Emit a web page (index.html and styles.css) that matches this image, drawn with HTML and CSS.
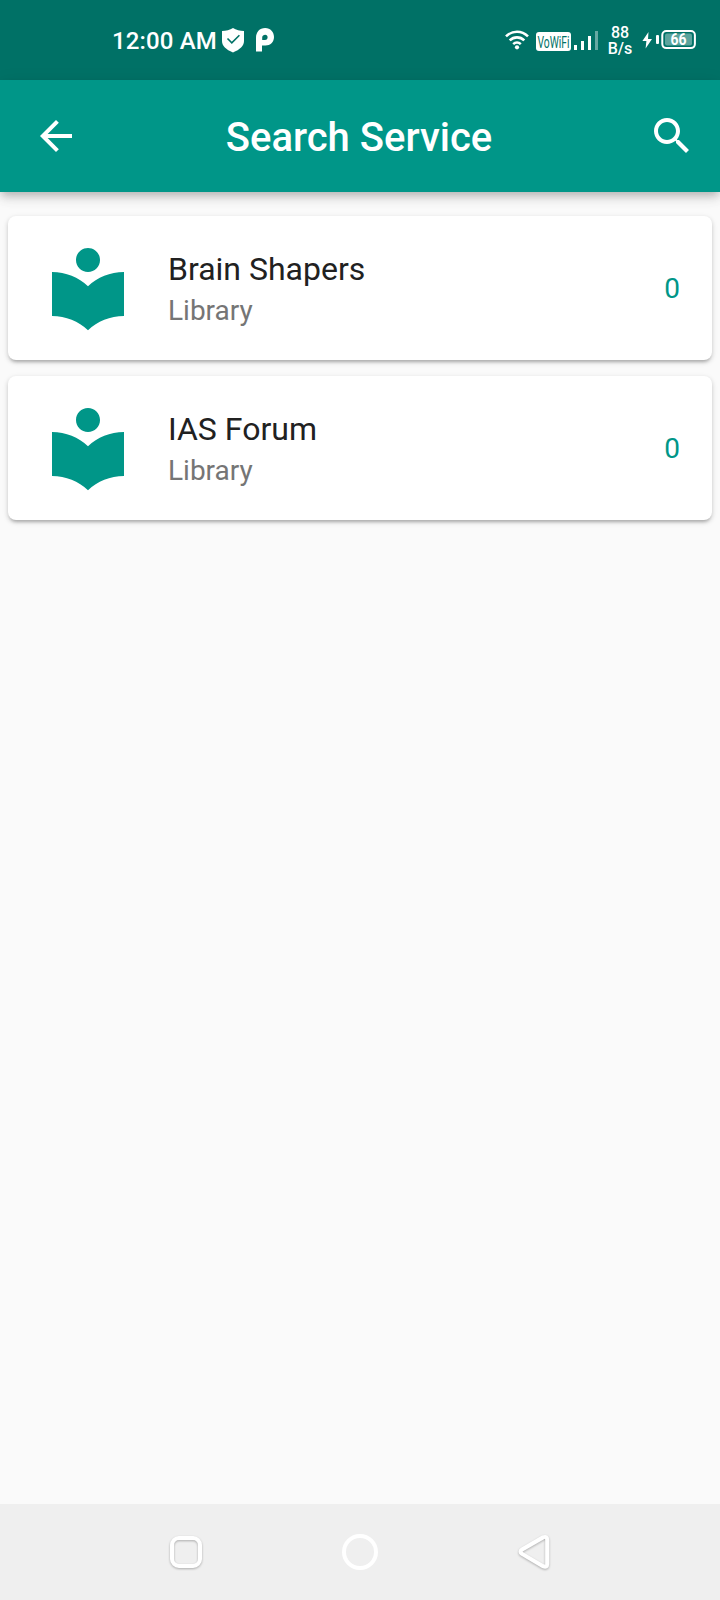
FILE: index.html
```html
<!DOCTYPE html>
<html lang="en">
<head>
<meta charset="utf-8">
<title>Search Service</title>
<link rel="stylesheet" href="styles.css">
</head>
<body>
<div class="screen">
  <div class="status">
    <span class="clock">12:00 AM</span>
    <svg class="shield" width="24" height="26" viewBox="0 0 24 26"><path fill="#fff" d="M12 1C9 3 5 4 1 4v10c0 5 4 8.500 11 11.500C19 22.500 23 19 23 14V4C19 4 15 3 12 1z"/><path fill="none" stroke="#007166" stroke-width="1.600" d="M6.500 11.500l4.300 4.300 7.600-7.600"/></svg>
    <svg class="plogo" width="18" height="24" viewBox="0 0 18 24"><path fill="#fff" fill-rule="evenodd" d="M0 23.500V10C0 4 3.500 0 9.200 0 14.500 0 18 4 18 9c0 5-3.700 8.500-8.500 8.500H6v6zM6.200 12H9C10.800 12 11.600 10.700 11.600 9.300S10.700 6.700 9.200 6.700 6.200 7.600 6.200 9.500z"/></svg>
    <div class="system">
      <svg class="wifi" width="24" height="20" viewBox="0 0 24 20"><g fill="none" stroke="#fff" stroke-width="2.600"><path d="M1 6.400C7.400.2 16.600.2 23 6.400"/><path d="M4.700 10.400c4.200-4 10.400-4 14.600 0"/><path d="M8.200 14.100c2.200-2 5.400-2 7.600 0"/></g><circle cx="12" cy="17.300" r="2.100" fill="#fff"/></svg>
      <svg class="vowifi" width="35" height="19" viewBox="0 0 35 19"><rect width="35" height="19" rx="3" fill="#fff"/><text x="1.500" y="15.500" textLength="32" lengthAdjust="spacingAndGlyphs">VoWiFi</text></svg>
      <svg class="signal" width="24" height="19" viewBox="0 0 24 19" fill="#fff"><path d="M0 14h3v5H0zM7 10h3v9H7zM14 5h3v14h-3z"/><path d="M21 0h3v19h-3z" opacity=".4"/></svg>
      <div class="speed"><span>88</span><span>B/s</span></div>
      <svg class="battery" width="54" height="20" viewBox="0 0 54 20"><path fill="#fff" d="M6.500 2L.4 11h4L3.600 18.500 10 9H6z"/><rect x="14" y="5" width="3" height="9" rx="1" fill="#fff"/><rect x="20.300" y="1.100" width="32.600" height="17" rx="4" fill="none" stroke="#fff" stroke-width="2"/><rect x="23" y="3.600" width="27" height="12" rx="2" fill="#fff" opacity=".36"/><text x="28.500" y="15.300" textLength="16" lengthAdjust="spacingAndGlyphs">66</text></svg>
    </div>
  </div>
  <header class="appbar">
    <svg class="action" viewBox="0 0 24 24"><path d="M20 11H7.830l5.590-5.590L12 4l-8 8 8 8 1.410-1.410L7.830 13H20v-2z"/></svg>
    <h1 class="title">Search Service</h1>
    <svg class="action" viewBox="0 0 24 24"><path d="M15.500 14h-.79l-.28-.27C15.410 12.590 16 11.110 16 9.500 16 5.910 13.090 3 9.500 3S3 5.910 3 9.500 5.910 16 9.500 16c1.610 0 3.090-.59 4.230-1.570l.27.28v.79l5 4.990L20.490 19l-4.990-5zm-6 0C7.010 14 5 11.990 5 9.500S7.010 5 9.500 5 14 7.010 14 9.500 11.990 14 9.500 14z"/></svg>
  </header>
  <main class="list">
    <article class="card">
      <svg class="library" viewBox="0 0 24 24"><path d="M12 11.550C9.640 9.350 6.480 8 3 8v11c3.480 0 6.640 1.350 9 3.550 2.360-2.190 5.520-3.550 9-3.550V8c-3.480 0-6.640 1.350-9 3.550zM12 8c1.660 0 3-1.340 3-3s-1.340-3-3-3-3 1.340-3 3 1.340 3 3 3z"/></svg>
      <div class="info"><div class="name">Brain Shapers</div><div class="kind">Library</div></div>
      <div class="count">0</div>
    </article>
    <article class="card">
      <svg class="library" viewBox="0 0 24 24"><path d="M12 11.550C9.640 9.350 6.480 8 3 8v11c3.480 0 6.640 1.350 9 3.550 2.360-2.190 5.520-3.550 9-3.550V8c-3.480 0-6.640 1.350-9 3.550zM12 8c1.660 0 3-1.340 3-3s-1.340-3-3-3-3 1.340-3 3 1.340 3 3 3z"/></svg>
      <div class="info"><div class="name">IAS Forum</div><div class="kind">Library</div></div>
      <div class="count">0</div>
    </article>
  </main>
  <nav class="navbar">
    <svg class="key shaded" viewBox="0 0 40 40"><rect x="6" y="6" width="28" height="28" rx="7"/></svg>
    <svg class="key" viewBox="0 0 40 40"><circle cx="20" cy="20" r="16"/></svg>
    <svg class="key shaded" viewBox="0 0 40 40"><path d="M8.100 17.500Q5 19.600 8.100 21.900L29 34.200Q33.200 36 33.200 32V8Q33.200 3.600 29 5.400z"/></svg>
  </nav>
</div>
</body>
</html>
```

FILE: styles.css
```css
* { box-sizing: border-box; }
body { margin: 0; background: #fafafa; font-family: Roboto, sans-serif; }
svg { display: block; flex: none; }
.screen { width: 720px; height: 1600px; display: flex; flex-direction: column; overflow: hidden; }
.status { height: 80px; flex: none; background: #007166; color: #fff; display: flex; align-items: center; padding: 0 24px 0 112px; }
.clock { width: 109px; font-size: 24px; font-weight: 500; line-height: 28px; letter-spacing: .15px; white-space: nowrap; padding-top: 2px; }
.plogo { margin-left: 11px; }
.system { margin-left: auto; display: flex; align-items: center; }
.vowifi { margin: 3px 0 0 7px; overflow: visible; }
.vowifi text { font-size: 16px; fill: #007166; }
.signal { margin-left: 3px; }
.speed { width: 36px; margin-left: 4px; display: flex; flex-direction: column; align-items: center; font-size: 16px; font-weight: 500; line-height: 16px; padding-top: 1px; }
.battery { margin-left: 4px; }
.battery text { font-size: 16px; font-weight: 700; fill: #fff; }
.appbar { height: 112px; flex: none; background: #009688; color: #fff; display: flex; align-items: center; justify-content: space-between; padding: 0 24px 0 32px; box-shadow: 0 4px 8px -2px rgba(0,0,0,.2), 0 8px 10px rgba(0,0,0,.08), 0 2px 16px rgba(0,0,0,.08); }
.action { width: 48px; height: 48px; fill: #fff; }
.title { margin: 0 10px 0 0; padding-top: 3px; font-size: 40px; line-height: 48px; font-weight: 500; white-space: nowrap; }
.list { flex: 1; padding: 24px 8px; display: flex; flex-direction: column; gap: 16px; }
.card { height: 144px; display: flex; align-items: center; padding: 0 32px; background: #fff; border-radius: 8px; box-shadow: 0 4px 3px -2px rgba(0,0,0,.16), 0 2px 4px rgba(0,0,0,.12), 0 2px 6px rgba(0,0,0,.1); }
.library { width: 96px; height: 96px; fill: #009688; }
.info { flex: 1; margin-left: 32px; }
.name { font-size: 32px; line-height: 40px; color: #212121; padding-top: 2px; }
.kind { font-size: 28px; line-height: 36px; color: #757575; padding-top: 4px; }
.count { font-size: 28px; line-height: 36px; color: #009688; padding-top: 2px; }
.navbar { height: 96px; flex: none; background: #efefef; display: flex; align-items: center; justify-content: center; gap: 134px; }
.key { width: 40px; height: 40px; fill: none; stroke: #fff; stroke-width: 4; overflow: visible; }
.shaded { filter: drop-shadow(0 1.500px 1px rgba(0,0,0,.28)); }
```
